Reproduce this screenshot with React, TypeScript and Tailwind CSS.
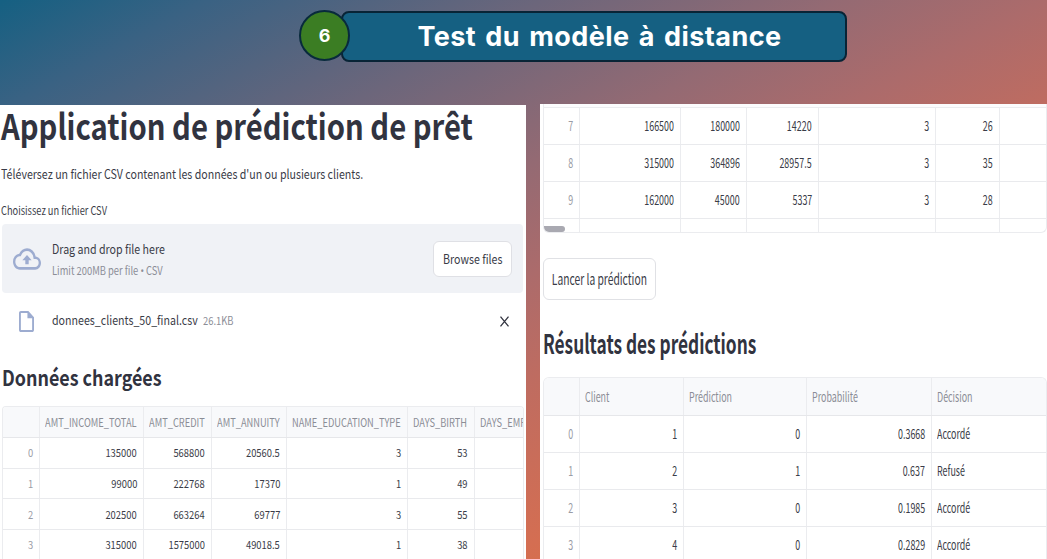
import type { ReactNode } from "react";

type Column = { label?: string; width: string; align?: "left" | "right" };

function Cell({
  children,
  className,
  textClass,
  align,
}: {
  children?: ReactNode;
  className: string;
  textClass: string;
  align: "left" | "right";
}) {
  return (
    <div
      className={`flex shrink-0 items-center overflow-hidden whitespace-nowrap border-r border-[#ebecef] ${
        align === "right" ? "justify-end" : "justify-start"
      } ${className}`}
    >
      <span className={`shrink-0 ${align === "right" ? "origin-right" : "origin-left"} ${textClass}`}>
        {children}
      </span>
    </div>
  );
}

const loadedColumns: Column[] = [
  { width: "w-[37px]" },
  { label: "AMT_INCOME_TOTAL", width: "w-[104px]" },
  { label: "AMT_CREDIT", width: "w-[68px]" },
  { label: "AMT_ANNUITY", width: "w-[75px]" },
  { label: "NAME_EDUCATION_TYPE", width: "w-[121px]" },
  { label: "DAYS_BIRTH", width: "w-[67px]" },
  { label: "DAYS_EMP", width: "w-[90px]" },
];

const loadedRows = [
  ["0", "135000", "568800", "20560.5", "3", "53", ""],
  ["1", "99000", "222768", "17370", "1", "49", ""],
  ["2", "202500", "663264", "69777", "3", "55", ""],
  ["3", "315000", "1575000", "49018.5", "1", "38", ""],
];

const tailWidths = ["w-[36px]", "w-[101px]", "w-[66px]", "w-[72px]", "w-[117px]", "w-[64px]", "w-[60px]"];

const tailRows = [
  ["7", "166500", "180000", "14220", "3", "26", ""],
  ["8", "315000", "364896", "28957.5", "3", "35", ""],
  ["9", "162000", "45000", "5337", "3", "28", ""],
];

const resultColumns: Column[] = [
  { width: "w-[36px]" },
  { label: "Client", width: "w-[104px]" },
  { label: "Prédiction", width: "w-[123px]" },
  { label: "Probabilité", width: "w-[125px]" },
  { label: "Décision", width: "w-[130px]", align: "left" },
];

const resultRows = [
  ["0", "1", "0", "0.3668", "Accordé"],
  ["1", "2", "1", "0.637", "Refusé"],
  ["2", "3", "0", "0.1985", "Accordé"],
  ["3", "4", "0", "0.2829", "Accordé"],
];

function Banner() {
  return (
    <header className="flex h-[104px] items-start pl-[299px] pt-[10px]">
      <div className="z-10 flex size-[51px] shrink-0 items-center justify-center rounded-full border-2 border-[#082a3c] bg-[#3b7d23] font-['Inter',sans-serif] text-[18px] font-bold text-white">
        6
      </div>
      <div className="-ml-[9px] mt-px flex h-[51px] w-[506px] items-center justify-center rounded-lg border-2 border-[#082436] bg-[#156082] pl-[11px]">
        <h1 className="whitespace-nowrap font-['Inter',sans-serif] text-[27px] font-bold leading-none tracking-[0.45px] text-white [word-spacing:2.3px]">
          Test du modèle à distance
        </h1>
      </div>
    </header>
  );
}

function UploadPanel() {
  return (
    <section className="mt-px flex w-[526px] shrink-0 flex-col overflow-hidden whitespace-nowrap bg-white pl-[2px] text-[#3a3c47]">
      <h2 className="-ml-px flex h-[39px] shrink-0 items-center text-[#31333f]">
        <span className="origin-left scale-x-[.835] text-[35px] font-bold leading-none">
          Application de prédiction de prêt
        </span>
      </h2>
      <p className="-ml-px mt-[16px] flex h-[27px] shrink-0 items-center">
        <span className="origin-left scale-x-[.817] text-[13px]">
          Téléversez un fichier CSV contenant les données d'un ou plusieurs clients.
        </span>
      </p>
      <p className="-ml-px mt-[14px] flex h-[19px] shrink-0 items-center">
        <span className="origin-left scale-x-[.82] text-[11.3px]">Choisissez un fichier CSV</span>
      </p>

      <div className="mt-[4px] flex h-[69px] w-[521px] shrink-0 items-center rounded bg-[#f0f2f6] pl-[11px] pr-[11px]">
        <svg
          className="h-8 w-[28px] shrink-0"
          viewBox="0 0 24 24"
          preserveAspectRatio="none"
          fill="#9dacd0"
        >
          <path d="M19.35 10.04A7.49 7.49 0 0 0 12 4C9.11 4 6.6 5.64 5.35 8.04A5.994 5.994 0 0 0 0 14c0 3.31 2.69 6 6 6h13c2.76 0 5-2.24 5-5 0-2.64-2.05-4.78-4.65-4.96zM19 18H6c-2.21 0-4-1.79-4-4 0-2.05 1.53-3.76 3.56-3.97l1.07-.11.5-.95A5.469 5.469 0 0 1 12 6c2.62 0 4.88 1.86 5.39 4.43l.3 1.5 1.53.11A2.98 2.98 0 0 1 22 15c0 1.65-1.35 3-3 3zM8 13h2.55v3h2.9v-3H16l-4-4z" />
        </svg>
        <div className="ml-[11px] mt-[2px] flex flex-1 flex-col">
          <div className="flex h-[23px] items-center">
            <span className="origin-left scale-x-[.83] text-[12.8px]">Drag and drop file here</span>
          </div>
          <div className="flex h-[22px] items-center text-[#8b8d96]">
            <span className="origin-left scale-x-[.83] text-[11.3px]">
              Limit 200MB per file <span className="font-['Noto_Sans']">•</span> CSV
            </span>
          </div>
        </div>
        <button className="flex h-[36px] w-[79px] shrink-0 items-center justify-center rounded-md border border-[#dfe0e5] bg-white">
          <span className="shrink-0 scale-x-[.83] text-[12.8px]">Browse files</span>
        </button>
      </div>

      <div className="mt-[12px] flex h-[32px] w-[521px] shrink-0 items-center pl-[17px] pr-[14px]">
        <svg className="h-[21px] w-[15px] shrink-0" viewBox="0 0 16 20" preserveAspectRatio="none" fill="#9dacd0">
          <path d="M2 0C.9 0 0 .9 0 2v16c0 1.100.9 2 2 2h12c1.100 0 2-.9 2-2V6l-6-6H2zm0 18V2h7v5h5v11H2z" />
        </svg>
        <span className="mb-[7px] ml-[18px] w-[151px]">
          <span className="inline-block origin-left scale-x-[.845] text-[12.6px]">donnees_clients_50_final.csv</span>
        </span>
        <span className="mb-[7px] flex-1">
          <span className="inline-block origin-left scale-x-[.83] text-[11.3px] text-[#8b8d96]">26.1KB</span>
        </span>
        <svg className="h-[11px] w-[9px] shrink-0" viewBox="0 0 9 11" fill="none" stroke="#31333f" strokeWidth="1.3">
          <path d="M.5.7l8 9.600M8.500.7l-8 9.600" />
        </svg>
      </div>

      <h3 className="mt-[24px] flex h-[32px] shrink-0 items-center text-[#31333f]">
        <span className="origin-left scale-x-[.832] text-[21.5px] font-bold leading-none">Données chargées</span>
      </h3>

      <div className="mt-[13px] flex w-[522px] flex-1 flex-col overflow-hidden rounded-t border-x border-t border-[#ebecef]">
        <div className="flex h-[31px] shrink-0 border-b border-[#e6e7ea] bg-[#f8f9fb] text-[#8b8d96]">
          {loadedColumns.map((c, i) => (
            <Cell key={i} align="left" className={`${c.width} pl-[5px] pt-px`} textClass="scale-x-[.82] text-[11.300px]">
              {c.label}
            </Cell>
          ))}
        </div>
        {loadedRows.map((row) => (
          <div key={row[0]} className="flex h-[30.6px] shrink-0 border-b border-[#e9eaed]">
            {row.map((v, i) => (
              <Cell
                key={i}
                align="right"
                className={`${loadedColumns[i].width} pr-[6px] ${i === 0 ? "text-[#9a9ca5]" : ""}`}
                textClass="scale-x-[.83] text-[11.300px]"
              >
                {v}
              </Cell>
            ))}
          </div>
        ))}
      </div>
    </section>
  );
}

function ResultPanel() {
  return (
    <section className="ml-[14px] flex flex-1 flex-col overflow-hidden whitespace-nowrap bg-white pl-[3px] text-[#3a3c47]">
      <div className="relative flex h-[129px] shrink-0 flex-col overflow-hidden rounded-b-md border-x border-b border-[#ebecef]">
        <div className="h-[4px] shrink-0 border-b border-[#ebecef] bg-[#fcfcfd]" />
        {tailRows.map((row) => (
          <div key={row[0]} className="flex h-[37px] shrink-0 border-b border-[#e9eaed]">
            {row.map((v, i) => (
              <Cell
                key={i}
                align="right"
                className={`${tailWidths[i]} pr-[6px] ${i === 0 ? "text-[#9a9ca5]" : ""}`}
                textClass="scale-x-[.676] text-[13.200px]"
              >
                {v}
              </Cell>
            ))}
          </div>
        ))}
        <div className="flex flex-1">
          {tailWidths.map((w, i) => (
            <Cell key={i} align="right" className={w} textClass="" />
          ))}
        </div>
        <div className="absolute bottom-0 left-0 h-[6px] w-[21px] rounded-[3px] rounded-tl-none bg-[#a9a9b1]" />
      </div>

      <button className="mt-[25px] flex h-[42px] w-[113px] shrink-0 items-center justify-center rounded-md border border-[#e0e1e5]">
        <span className="shrink-0 scale-x-[.685] text-[15px]">Lancer la prédiction</span>
      </button>

      <h3 className="mt-[23px] flex h-[40px] shrink-0 items-center text-[#31333f]">
        <span className="origin-left scale-x-[.652] text-[26.500px] font-bold leading-none">
          Résultats des prédictions
        </span>
      </h3>

      <div className="mt-[14px] flex flex-1 flex-col overflow-hidden rounded-t-md border-x border-t border-[#ebecef]">
        <div className="flex h-[38px] shrink-0 border-b border-[#e6e7ea] bg-[#f8f9fb] text-[#8b8d96]">
          {resultColumns.map((c, i) => (
            <Cell key={i} align="left" className={`${c.width} pl-[5px] pt-px`} textClass="scale-x-[.676] text-[13.200px]">
              {c.label}
            </Cell>
          ))}
        </div>
        {resultRows.map((row) => (
          <div key={row[0]} className="flex h-[37px] shrink-0 border-b border-[#e9eaed]">
            {row.map((v, i) => (
              <Cell
                key={i}
                align={resultColumns[i].align ?? "right"}
                className={`${resultColumns[i].width} pl-[5px] pr-[6px] ${i === 0 ? "text-[#9a9ca5]" : ""}`}
                textClass="scale-x-[.676] text-[13.200px]"
              >
                {v}
              </Cell>
            ))}
          </div>
        ))}
      </div>
    </section>
  );
}

export default function App() {
  return (
    <main className="flex h-[559px] w-[1047px] flex-col overflow-hidden bg-[linear-gradient(to_bottom_right,#156082_0%,#3a6283_10%,#6c667b_26%,#946a73_40%,#ac6b6b_50%,#be6c61_59%,#d46e52_74%,#e97132_100%)] font-['Noto_Sans_CJK_SC','Noto_Sans',sans-serif]">
      <Banner />
      <div className="flex min-h-0 flex-1">
        <UploadPanel />
        <ResultPanel />
      </div>
    </main>
  );
}
